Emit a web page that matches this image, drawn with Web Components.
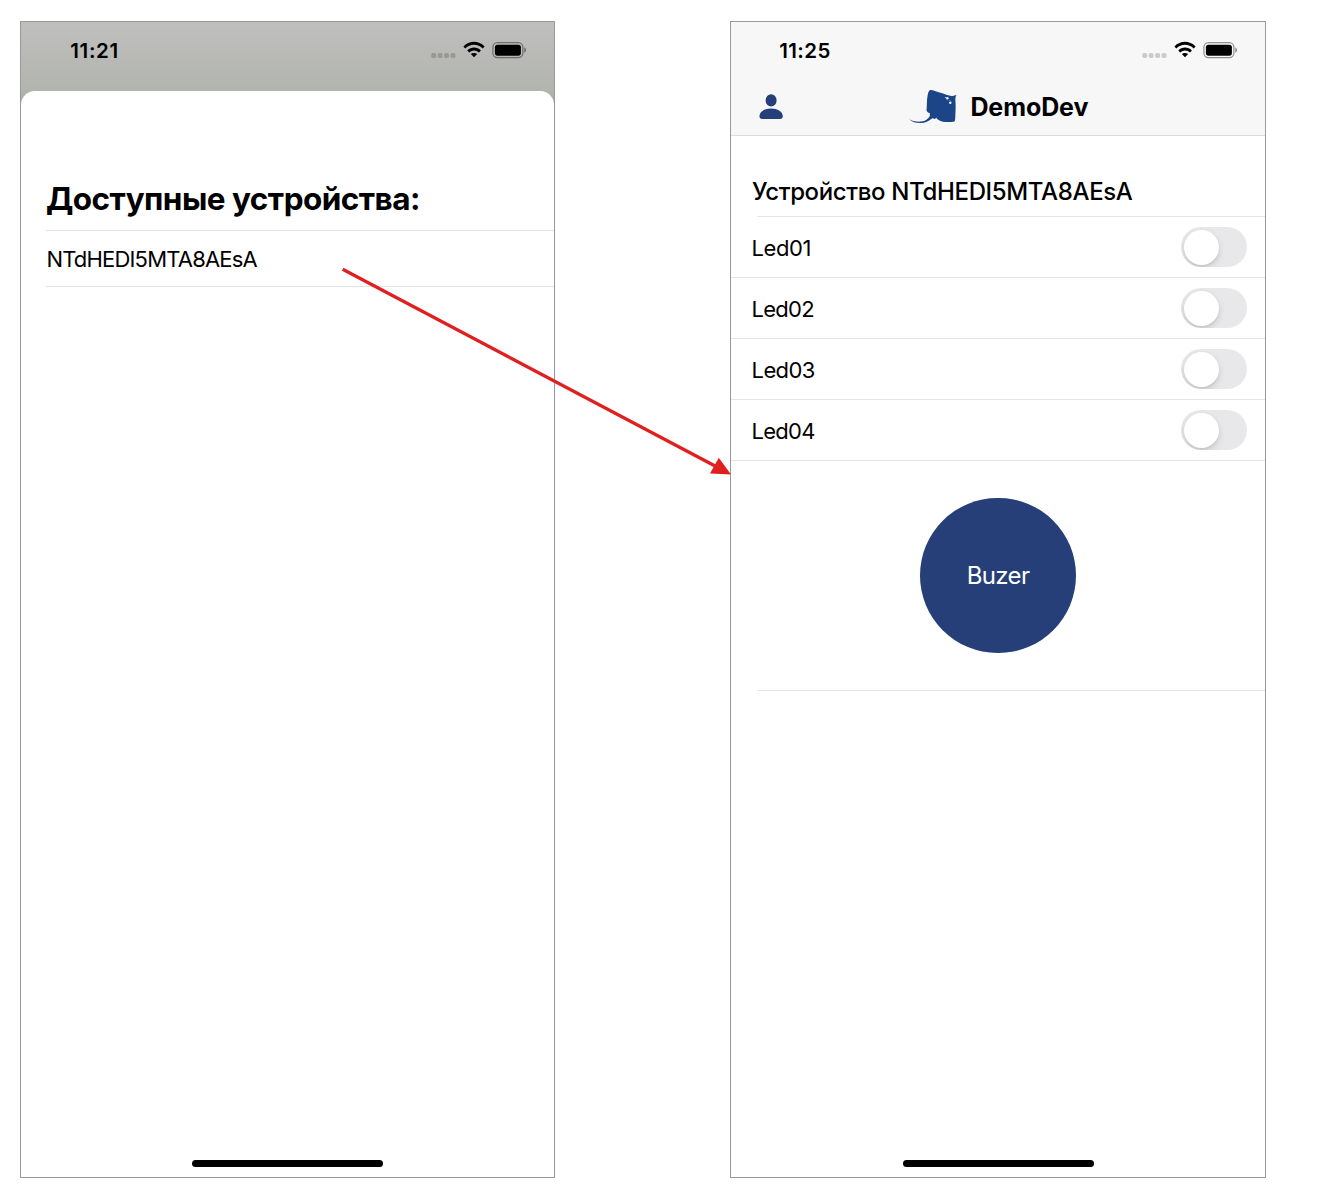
<!DOCTYPE html>
<html lang="ru">
<head>
<meta charset="utf-8">
<title>DemoDev</title>
<style>
html,body{margin:0;background:#fff}
body{width:1320px;height:1200px;overflow:hidden;font-family:Inter,"Liberation Sans",sans-serif;color:#000}
</style>
</head>
<body>
<demo-board></demo-board>
<script>
function define(name, html, setup) {
  customElements.define(name, class extends HTMLElement {
    constructor() {
      super();
      this.attachShadow({mode: 'open'}).innerHTML = html;
    }
    connectedCallback() { if (setup) setup(this, this.shadowRoot); }
  });
}

// Text run spread to a given advance width by tracking.
define('ui-label', `<style>:host{display:block;flex:none}span{display:block;width:max-content;white-space:nowrap}</style><span></span>`, (el, root) => {
  const s = root.querySelector('span');
  s.textContent = el.getAttribute('text');
  const target = parseFloat(el.getAttribute('span'));
  const w = s.getBoundingClientRect().width;
  s.style.letterSpacing = ((target - w) / s.textContent.length) + 'px';
});

define('status-bar', `
<style>
:host{display:flex;height:58px;box-sizing:border-box;padding-right:27px;justify-content:space-between}
.time{font-size:20.500px;font-weight:600;line-height:24px;padding-top:17px}
svg{display:block;margin-top:18px;flex:none}
</style>
<div class="time"></div>
<svg width="98" height="20" viewBox="0 0 98 20">
  <g class="dots"><rect x="2.200" y="13" width="5" height="5" rx="1.800"/><rect x="8.600" y="13" width="5" height="5" rx="1.800"/><rect x="15.100" y="13" width="5" height="5" rx="1.800"/><rect x="21.500" y="13" width="5" height="5" rx="1.800"/></g>
  <path transform="translate(.3 .5)" d="M34.100 5.900l1.900 2c5-4.800 12.400-4.800 17.400 0l1.900-2c-6-6.100-15.200-6.100-21.200 0zM38 9.900l1.900 2c2.900-2.700 6.900-2.700 9.800 0l1.900-2c-4-3.800-9.600-3.800-13.600 0zM41.500 13.500l3.200 3.200 3.200-3.200c-1.900-1.500-4.500-1.500-6.400 0z"/>
  <rect x="63.900" y="2.700" width="30" height="15" rx="4.600" fill="none" stroke="#000" stroke-opacity=".42" stroke-width="1.200"/>
  <rect x="65.900" y="4.700" width="26" height="11" rx="2.600"/>
  <path d="M95.300 7.600v5.200c2.200-.6 2.200-4.600 0-5.200z" fill-opacity=".45"/>
</svg>`, (el, root) => {
  root.querySelector('.dots').setAttribute('fill', el.getAttribute('dots'));
  const t = root.querySelector('.time');
  t.style.paddingLeft = el.getAttribute('inset') + 'px';
  const label = document.createElement('ui-label');
  label.setAttribute('text', el.getAttribute('time'));
  label.setAttribute('span', el.getAttribute('span'));
  t.replaceChildren(label);
});

define('home-bar', `
<style>:host{display:block;width:191px;height:7px;border-radius:4px;background:#000;margin:auto auto 10px;flex:none}</style>`);

define('phone-frame', `
<style>:host{display:flex;flex-direction:column;box-sizing:border-box;height:1157px;border:1px solid #999;background:#fff;flex:none}</style>
<slot></slot><home-bar></home-bar>`);

define('list-line', `<style>:host{display:block;height:1px;background:#e5e5e6;flex:none}</style>`);

define('toggle-switch', `
<style>
:host{display:flex;box-sizing:border-box;width:66px;height:40px;border-radius:20px;background:#e8e8ea;padding:2.500px;overflow:hidden}
i{width:35px;height:35px;border-radius:50%;background:#fff;box-shadow:0 3px 7px rgba(0,0,0,.13),0 2px 2px rgba(0,0,0,.05)}
</style><i></i>`);

define('led-row', `
<style>
:host{display:flex;box-sizing:border-box;height:60px;align-items:center;justify-content:space-between;padding:0 18px 0 20.600px;flex:none}
div{font-size:22px;line-height:28px;padding-top:1px}
</style><div><slot></slot></div><toggle-switch></toggle-switch>`);

define('user-icon', `
<style>:host{display:block}svg{display:block}</style>
<svg width="24" height="26" viewBox="0 0 24 26" fill="#253f7b"><ellipse cx="12.100" cy="6.400" rx="5.500" ry="6.100"/><path d="M.5 22.200C.5 17.800 5.300 14.600 12 14.600s11.700 3.200 11.700 7.600c0 1.700-.9 2.700-2.600 2.700H3.100C1.400 24.900.5 23.900.5 22.200z"/></svg>`);

define('ray-logo', `
<style>:host{display:block}svg{display:block}</style>
<svg width="50" height="36" viewBox="0 0 50 36">
<path fill="#1c4587" d="M21.300 1c3.200-.1 5.800 1.500 9.300 2.600 4.800 1.400 9 3.200 12 3.300 1.800.1 3-.7 4.800-1-.9 1.800-1.200 3.700-1 5.800.5 5.400.1 10.700-.1 15.700-.1 2-.1 3.800-.8 5-2.100.5-5.700.6-8.900.5-3.800 0-6.600-1.100-8.700-3.100l-.5-1.200c-.6 1-1.300 1.400-2.300 1.300-.5-.7-1.300-.8-2.100-.4-3.400 2.700-7.200 4.800-11.900 4.600C6.600 34 3.200 32.800.2 30.200c4.600 2.200 8.400 2.800 12 2.400 4.300-.5 6.800-2.500 8.800-5.900-.4-.7-.4-1.500.2-2.200-1.600-.4-2.700-1.300-3.700-3 .6-4.300 0-10.300 1.200-15.600.4-2 .9-4.100 2.600-4.900z"/>
<circle cx="38.300" cy="9.200" r="1.200" fill="#f7f7f7"/><circle cx="41.300" cy="13.800" r="1.200" fill="#f7f7f7"/><circle cx="36.300" cy="8.600" r=".5" fill="#f7f7f7"/><circle cx="40.900" cy="11.500" r=".4" fill="#f7f7f7"/>
</svg>`);

define('devices-screen', `
<style>
:host{display:block;flex:none;width:535px}
phone-frame{width:535px}
.back{background:linear-gradient(#bfbfbe,#b2b4ae 70px,#a5a8a4 84px);height:69px;padding-bottom:26px;flex:none}
.sheet{background:#fff;border-radius:14px 14px 0 0;margin-top:-26px;padding-left:25px;display:flex;flex-direction:column}
.title{font-size:31.500px;font-weight:700;line-height:40px;padding:88px 0 11px}
.item{font-size:22px;line-height:28px;padding:14px 0 13px .4px}
</style>
<phone-frame>
<div class="back"><status-bar time="11:21" span="48.500" inset="49.300" dots="#989997"></status-bar></div>
<div class="sheet">
<ui-label class="title" text="Доступные устройства:" span="374"></ui-label>
<list-line></list-line>
<ui-label class="item" text="NTdHEDI5MTA8AEsA" span="210.500"></ui-label>
<list-line></list-line>
</div>
</phone-frame>`);

define('device-screen', `
<style>
:host{display:block;flex:none;width:536px}
phone-frame{width:536px}
header{background:#f7f7f7;height:113px;border-bottom:1px solid #dcdcdc;flex:none}
nav{display:flex;align-items:center;height:54px;padding:0 0 0 28px}
ray-logo{margin-left:126px}
.brand{font-size:25px;font-weight:700;line-height:32px;margin-left:11.400px;padding-bottom:1px}
.title{font-size:24px;font-weight:500;line-height:30px;padding:41px 0 9px 21px}
.short{margin-left:26px}
.pad{height:229px;display:flex;align-items:center;justify-content:center;flex:none}
button{font:400 24px Inter,sans-serif;color:#fff;background:#263f79;border:0;border-radius:50%;width:155.500px;height:155.500px;padding:0;display:flex;align-items:center;justify-content:center}
</style>
<phone-frame>
<header>
<status-bar time="11:25" span="51.500" inset="48.200" dots="#cbcbcb"></status-bar>
<nav><user-icon></user-icon><ray-logo></ray-logo><ui-label class="brand" text="DemoDev" span="118"></ui-label></nav>
</header>
<ui-label class="title" text="Устройство NTdHEDI5MTA8AEsA" span="380.500"></ui-label>
<list-line class="short"></list-line>
<led-row><ui-label text="Led01" span="59.300"></ui-label></led-row><list-line></list-line>
<led-row><ui-label text="Led02" span="62.300"></ui-label></led-row><list-line></list-line>
<led-row><ui-label text="Led03" span="63"></ui-label></led-row><list-line></list-line>
<led-row><ui-label text="Led04" span="63"></ui-label></led-row><list-line></list-line>
<div class="pad"><button><ui-label text="Buzer" span="62.500"></ui-label></button></div>
<list-line class="short"></list-line>
</phone-frame>`);

define('link-arrow', `
<style>:host{position:absolute;left:0;top:0;pointer-events:none}svg{display:block}</style>
<svg width="760" height="500" viewBox="0 0 760 500"><path d="M342.700 269.200L717 467" stroke="#e02020" stroke-width="3.300"/><path d="M718.800 457.800L731 474.600 710 473.600z" fill="#e02020"/></svg>`);

define('demo-board', `
<style>:host{display:flex;position:relative;box-sizing:border-box;width:1320px;height:1200px;padding:21px 0 0 20px;gap:175px;align-items:flex-start}</style>
<devices-screen></devices-screen><device-screen></device-screen><link-arrow></link-arrow>`);
</script>
</body>
</html>
